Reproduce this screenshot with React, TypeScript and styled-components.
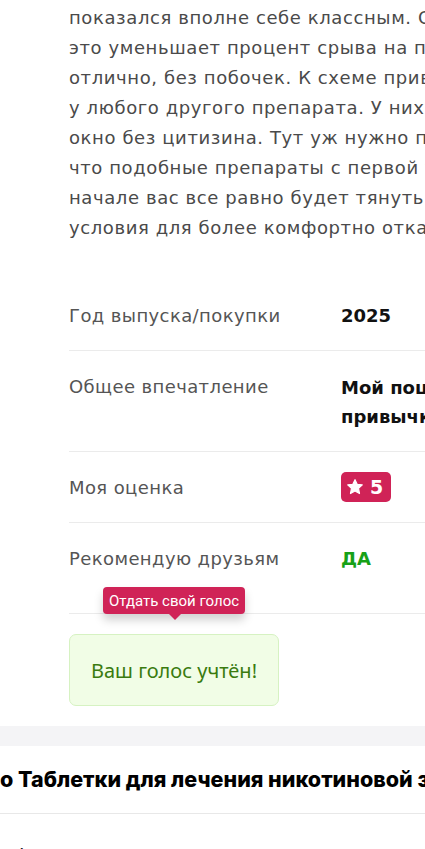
import React from "react";
import styled, { createGlobalStyle } from "styled-components";

const GlobalStyle = createGlobalStyle`
  html, body {
    margin: 0;
    padding: 0;
    background: #ffffff;
    overflow: hidden;
  }
  body {
    font-family: "DejaVu Sans", Inter, Arial, sans-serif;
  }
`;

const Page = styled.div`
  width: 425px;
  height: 849px;
  overflow: hidden;
  background: #fff;
`;

const Article = styled.div`
  width: 800px;
  padding-left: 69px;
  box-sizing: border-box;
`;

const Paragraph = styled.p`
  margin: 0 0 37px;
  padding-top: 3px;
  font-size: 18px;
  line-height: 30px;
  letter-spacing: 0.6px;
  color: #4a4a4a;
  white-space: nowrap;
`;

const Table = styled.div`
  display: flex;
  flex-direction: column;
`;

const Row = styled.div<{ $extraBottom?: number }>`
  display: grid;
  grid-template-columns: 272px 1fr;
  padding: 22px 0 ${(p) => 20 + (p.$extraBottom ?? 0)}px;
  border-bottom: 1px solid #ebebeb;
  font-size: 18px;
  line-height: 28px;
`;

const Label = styled.div`
  color: #555555;
  letter-spacing: 0.4px;
`;

const Value = styled.div<{ $color?: string; $lh?: number }>`
  color: ${(p) => p.$color ?? "#111111"};
  font-weight: 700;
  line-height: ${(p) => p.$lh ?? 28}px;
  white-space: nowrap;
`;

const Badge = styled.span`
  display: inline-flex;
  align-items: center;
  gap: 6px;
  height: 30px;
  padding: 0 8px 0 5px;
  margin: -2px 0 0;
  border-radius: 5px;
  background: #d02357;
  color: #fff;
  font-weight: 800;
  font-size: 19px;
  vertical-align: top;
`;

const VoteArea = styled.div`
  position: relative;
  padding-top: 20px;
`;

const Tooltip = styled.div`
  position: absolute;
  left: 34px;
  top: -27px;
  height: 27px;
  padding: 0 6px;
  display: flex;
  align-items: center;
  background: #d02357;
  color: #fff;
  border-radius: 4px;
  font-family: Roboto, Arial, sans-serif;
  font-size: 15px;
  box-shadow: 0 6px 10px rgba(0, 0, 0, 0.18);
  white-space: nowrap;
  &::after {
    content: "";
    position: absolute;
    left: 66px;
    bottom: -6px;
    border-left: 6px solid transparent;
    border-right: 6px solid transparent;
    border-top: 6px solid #d02357;
  }
`;

const VotedBox = styled.div`
  width: 210px;
  height: 72px;
  box-sizing: border-box;
  display: flex;
  align-items: center;
  justify-content: center;
  background: #f1fde6;
  border: 1px solid #d6f2c2;
  border-radius: 7px;
  color: #3a7b0f;
  font-family: "Noto Sans", Arial, sans-serif;
  font-size: 20px;
`;

const GrayBand = styled.div`
  height: 20px;
  margin-top: 20px;
  background: #f4f4f6;
`;

const Section = styled.section`
  background: #fff;
  width: 800px;
`;

const SectionTitle = styled.h2`
  margin: 0;
  padding: 19px 0 20px;
  font-family: Inter, Arial, sans-serif;
  font-size: 21.5px;
  line-height: 28px;
  font-weight: 800;
  color: #000;
  white-space: nowrap;
  border-bottom: 1px solid #e8e8e8;
`;

const SectionRow = styled.div`
  padding: 27px 0 0 14px;
  font-size: 18px;
  line-height: 28px;
  color: #222;
  white-space: nowrap;
`;

const Star = () => (
  <svg width="18" height="18" viewBox="0 0 24 24" aria-hidden="true">
    <path
      fill="#fff"
      stroke="#fff"
      strokeWidth="1.6"
      strokeLinejoin="round"
      d="M12 2.2l2.9 6.2 6.8.8-5 4.7 1.3 6.8L12 17.4l-6 3.3 1.3-6.8-5-4.7 6.8-.8z"
    />
  </svg>
);

const lines = [
  "показался вполне себе классным. Он помогает снизить тягу, и",
  "это уменьшает процент срыва на первых порах. Переносится",
  "отлично, без побочек. К схеме привыкаешь быстро, как и",
  "у любого другого препарата. У них удобная упаковка, а также",
  "окно без цитизина. Тут уж нужно просто держаться. Стоит учесть,",
  "что подобные препараты с первой таблетки не помогут, и в",
  "начале вас все равно будет тянуть на сигарету, но они создают",
  "условия для более комфортно отказа от курения.",
];

export default function App() {
  return (
    <Page>
      <GlobalStyle />
      <Article>
        <Paragraph>
          {lines.map((l, i) => (
            <React.Fragment key={i}>
              {l}
              {i < lines.length - 1 && <br />}
            </React.Fragment>
          ))}
        </Paragraph>
        <Table>
          <Row>
            <Label>Год выпуска/покупки</Label>
            <Value>2025</Value>
          </Row>
          <Row>
            <Label>Общее впечатление</Label>
            <Value $lh={29}>
              Мой пошаговый отказ от вредной
              <br />
              привычки
            </Value>
          </Row>
          <Row>
            <Label>Моя оценка</Label>
            <Value>
              <Badge>
                <Star />5
              </Badge>
            </Value>
          </Row>
          <Row $extraBottom={20}>
            <Label>Рекомендую друзьям</Label>
            <Value $color="#17a117">ДА</Value>
          </Row>
        </Table>
        <VoteArea>
          <Tooltip>Отдать свой голос</Tooltip>
          <VotedBox>Ваш голос учтён!</VotedBox>
        </VoteArea>
      </Article>
      <GrayBand />
      <Section>
        <SectionTitle>о Таблетки для лечения никотиновой зависимости</SectionTitle>
        <SectionRow>Фото</SectionRow>
      </Section>
    </Page>
  );
}
